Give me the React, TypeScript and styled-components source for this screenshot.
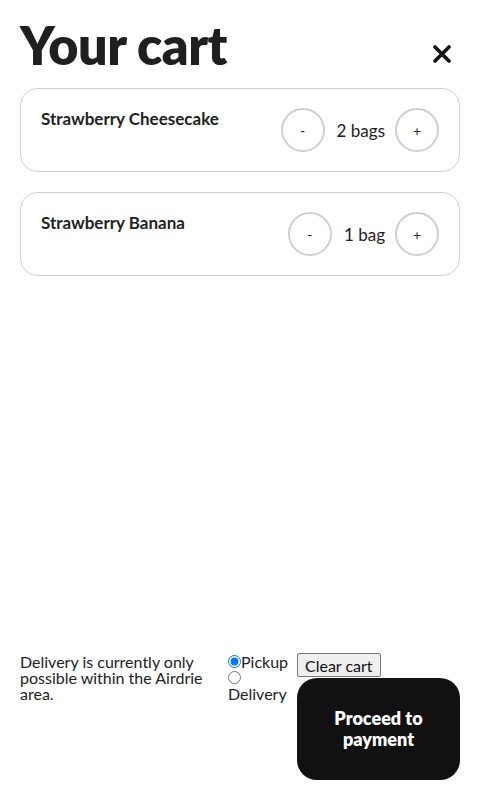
import React, { useState } from 'react';
import styled, { createGlobalStyle } from 'styled-components';

interface ICartItem {
  name: string;
  qty: number;
}

const initialItems: ICartItem[] = [
  { name: 'Strawberry Cheesecake', qty: 2 },
  { name: 'Strawberry Banana', qty: 1 },
];

export default function App() {
  const [items, setItems] = useState(initialItems);
  const [method, setMethod] = useState('pickup');

  const change = (index: number, delta: number) => {
    setItems((items) =>
      items.map((item, i) =>
        i === index ? { ...item, qty: Math.max(0, item.qty + delta) } : item
      )
    );
  };

  return (
    <>
      <GlobalStyle />
      <Page>
        <Header>
          <Title>Your cart</Title>
          <CloseButton aria-label="Close cart">
            <svg width="18" height="18" viewBox="0 0 18 18">
              <path
                d="M2 2 L16 16 M16 2 L2 16"
                stroke="#111"
                strokeWidth="3.6"
                strokeLinecap="round"
              />
            </svg>
          </CloseButton>
        </Header>

        <CartList>
          {items.map((item, i) => (
            <CartItem
              key={item.name}
              item={item}
              onMinus={() => change(i, -1)}
              onPlus={() => change(i, 1)}
            />
          ))}
        </CartList>

        <Footer>
          <Note>Delivery is currently only possible within the Airdrie area.</Note>
          <RadioGroup>
            <input
              type="radio"
              name="method"
              checked={method === 'pickup'}
              onChange={() => setMethod('pickup')}
            />
            Pickup{' '}
            <input
              type="radio"
              name="method"
              checked={method === 'delivery'}
              onChange={() => setMethod('delivery')}
            />
            Delivery
          </RadioGroup>
          <Actions>
            <ClearButton onClick={() => setItems([])}>Clear cart</ClearButton>
            <PayButton>Proceed to payment</PayButton>
          </Actions>
        </Footer>
      </Page>
    </>
  );
}

interface ICartItemProps {
  item: ICartItem;
  onMinus: () => void;
  onPlus: () => void;
}

function CartItem({ item, onMinus, onPlus }: ICartItemProps) {
  return (
    <Card>
      <ItemName>{item.name}</ItemName>
      <Controls>
        <RoundButton onClick={onMinus}>-</RoundButton>
        <Qty>
          {item.qty} {item.qty === 1 ? 'bag' : 'bags'}
        </Qty>
        <RoundButton onClick={onPlus}>+</RoundButton>
      </Controls>
    </Card>
  );
}

const GlobalStyle = createGlobalStyle`
  * {
    box-sizing: border-box;
  }
  body {
    margin: 0;
    background: #fff;
    font-family: Lato, 'Open Sans', sans-serif;
    color: #222;
  }
`;

const Page = styled.div`
  min-height: 100vh;
  padding: 20px;
  display: flex;
  flex-direction: column;
`;

const Header = styled.div`
  display: flex;
  justify-content: space-between;
  align-items: flex-end;
  margin-bottom: 18px;
`;

const Title = styled.h1`
  margin: 0;
  font-size: 52px;
  line-height: 50px;
  font-weight: 800;
  color: #1f1f1f;
  letter-spacing: -0.5px;
`;

const CloseButton = styled.button`
  width: 28px;
  height: 28px;
  padding: 0;
  margin: 0 4px 2px 0;
  border: none;
  background: transparent;
  display: flex;
  align-items: center;
  justify-content: center;
  cursor: pointer;
`;

const CartList = styled.div`
  display: flex;
  flex-direction: column;
  gap: 20px;
`;

const Card = styled.div`
  border: 1px solid #cfcfcf;
  border-radius: 18px;
  padding: 19px 20px;
  display: flex;
  justify-content: space-between;
  align-items: center;
`;

const ItemName = styled.div`
  align-self: flex-start;
  font-size: 17px;
  font-weight: 700;
  color: #222;
`;

const Controls = styled.div`
  display: flex;
  align-items: center;
`;

const RoundButton = styled.button`
  width: 44px;
  height: 44px;
  border-radius: 50%;
  border: 2px solid #cfcfcf;
  background: #fff;
  font-family: Lato, sans-serif;
  font-size: 14px;
  color: #222;
  padding: 0;
  cursor: pointer;
`;

const Qty = styled.span`
  font-size: 17px;
  margin: 0 10px 0 12px;
  color: #222;
`;

const Footer = styled.div`
  margin-top: auto;
  display: flex;
  align-items: flex-start;
`;

const Note = styled.p`
  width: 208px;
  margin: 0;
  padding-top: 1px;
  font-size: 16px;
  line-height: 16px;
  color: #222;
`;

const RadioGroup = styled.div`
  width: 65px;
  padding-top: 1px;
  font-size: 16px;
  line-height: 16px;
  color: #222;

  input {
    margin: 0;
    width: 13px;
    height: 13px;
  }
`;

const Actions = styled.div`
  margin-left: 4px;
  width: 163px;
  display: flex;
  flex-direction: column;
  align-items: flex-start;
  gap: 1px;
`;

const ClearButton = styled.button`
  height: 24px;
  padding: 1px 7px;
  font-family: Lato, sans-serif;
  font-size: 16px;
  color: #111;
  background: #efefef;
  border: 1px solid #767676;
  border-radius: 2px;
  cursor: pointer;
`;

const PayButton = styled.button`
  width: 163px;
  height: 102px;
  border: none;
  border-radius: 20px;
  background: #111;
  color: #fff;
  font-family: Lato, sans-serif;
  font-size: 18px;
  font-weight: 800;
  line-height: 21px;
  padding: 0 28px;
  cursor: pointer;
`;
